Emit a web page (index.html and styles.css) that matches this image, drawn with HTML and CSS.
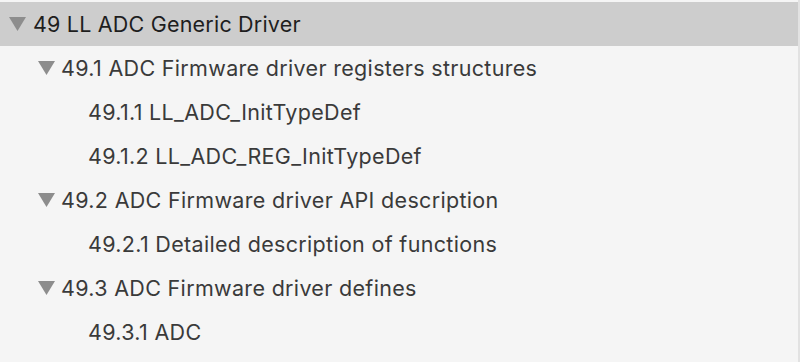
FILE: index.html
```html
<!DOCTYPE html>
<html lang="en">
<head>
    <meta charset="UTF-8">
    <title>Outline</title>
    <link rel="stylesheet" href="styles.css">
</head>
<body>
    <div class="outline">
        <ul class="tree">
            <li>
                <div class="row lvl1 selected">
                    <svg class="tri" width="17" height="14" viewBox="0 0 17 14"><polygon points="0,0 17,0 8.5,14"/></svg>
                    <span class="label">49 LL ADC Generic Driver</span>
                </div>
                <ul class="tree">
                    <li>
                        <div class="row lvl2">
                            <svg class="tri" width="17" height="14" viewBox="0 0 17 14"><polygon points="0,0 17,0 8.5,14"/></svg>
                            <span class="label">49.1 ADC Firmware driver registers structures</span>
                        </div>
                        <ul class="tree">
                            <li><div class="row lvl3"><span class="label">49.1.1 LL_ADC_InitTypeDef</span></div></li>
                            <li><div class="row lvl3"><span class="label">49.1.2 LL_ADC_REG_InitTypeDef</span></div></li>
                        </ul>
                    </li>
                    <li>
                        <div class="row lvl2">
                            <svg class="tri" width="17" height="14" viewBox="0 0 17 14"><polygon points="0,0 17,0 8.5,14"/></svg>
                            <span class="label">49.2 ADC Firmware driver API description</span>
                        </div>
                        <ul class="tree">
                            <li><div class="row lvl3"><span class="label">49.2.1 Detailed description of functions</span></div></li>
                        </ul>
                    </li>
                    <li>
                        <div class="row lvl2">
                            <svg class="tri" width="17" height="14" viewBox="0 0 17 14"><polygon points="0,0 17,0 8.5,14"/></svg>
                            <span class="label">49.3 ADC Firmware driver defines</span>
                        </div>
                        <ul class="tree">
                            <li><div class="row lvl3"><span class="label">49.3.1 ADC</span></div></li>
                        </ul>
                    </li>
                </ul>
            </li>
        </ul>
    </div>
</body>
</html>
```
FILE: styles.css
```css
body{
    margin: 0;
    background-color: #f5f5f5;
    font-family: Inter, "Noto Sans", sans-serif;
}
.outline{
    height: 362px;
    padding-top: 2px;
    box-sizing: border-box;
    border-right: 2px solid #e2e2e2;
    overflow: hidden;
}
.tree{
    list-style: none;
    margin: 0;
    padding: 0;
}
.row{
    display: flex;
    align-items: center;
    height: 44px;
    font-size: 21.5px;
    letter-spacing: 0.32px;
    color: #3a3a3a;
    white-space: nowrap;
}
.selected{
    background-color: #cdcdcd;
    color: #1e1e1e;
    letter-spacing: 0.2px;
}
.tri{
    fill: #8d8d8d;
    flex: none;
    margin-right: 7px;
}
.lvl1{
    padding-left: 9px;
}
.lvl2{
    padding-left: 38px;
}
.lvl2 .tri{
    margin-right: 6px;
}
.lvl3{
    padding-left: 88px;
}
```
